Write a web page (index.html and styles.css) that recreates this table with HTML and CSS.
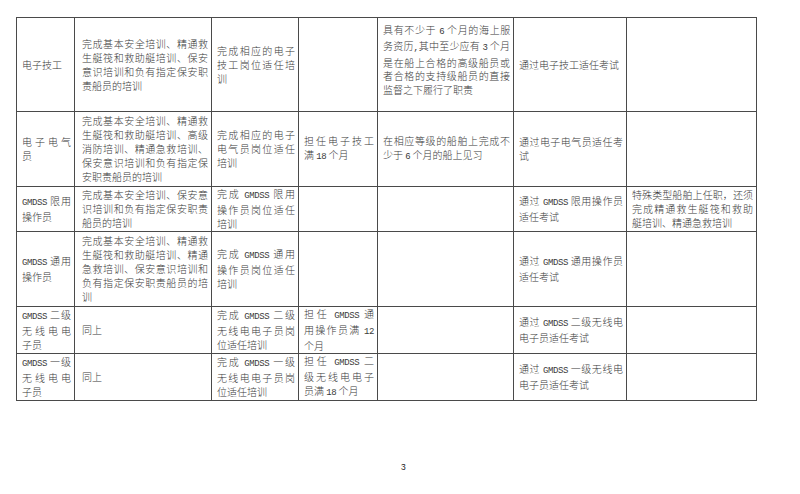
FILE: index.html
```html
<!DOCTYPE html>
<html lang="zh-CN">
<head>
<meta charset="utf-8">
<title>电子技工及 GMDSS 人员适任要求</title>
<link rel="stylesheet" href="styles.css">
</head>
<body>
<div class="page">
  <table class="qual">
    <colgroup>
      <col class="c-post">
      <col class="c-train">
      <col class="c-job">
      <col class="c-serve">
      <col class="c-sea">
      <col class="c-exam">
      <col class="c-note">
    </colgroup>
    <tbody>
      <tr class="row-a">
        <td>电子技工</td>
        <td class="wide"><span class="ln">完成基本安全培训、精通救</span><span class="ln">生艇筏和救助艇培训、保安</span><span class="ln">意识培训和负有指定保安职</span>责船员的培训</td>
        <td><span class="ln">完成相应的电子</span><span class="ln">技工岗位适任培</span>训</td>
        <td></td>
        <td class="dense"><span class="ln cond">具有不少于 <span class="lat">6</span> 个月的海上服</span><span class="ln">务资历<span class="lat">,</span>其中至少应有 <span class="lat">3</span> 个月</span><span class="ln">是在船上合格的高级船员或</span><span class="ln">者合格的支持级船员的直接</span>监督之下履行了职责</td>
        <td>通过电子技工适任考试</td>
        <td></td>
      </tr>
      <tr class="row-b">
        <td><span class="ln">电子电气</span>员</td>
        <td class="wide"><span class="ln">完成基本安全培训、精通救</span><span class="ln">生艇筏和救助艇培训、高级</span><span class="ln">消防培训、精通急救培训、</span><span class="ln">保安意识培训和负有指定保</span>安职责船员的培训</td>
        <td><span class="ln">完成相应的电子</span><span class="ln">电气员岗位适任</span>培训</td>
        <td><span class="ln">担任电子技工</span>满 <span class="lat">18</span> 个月</td>
        <td><span class="ln">在相应等级的船舶上完成不</span>少于 <span class="lat">6</span> 个月的船上见习</td>
        <td><span class="ln">通过电子电气员适任考</span>试</td>
        <td></td>
      </tr>
      <tr class="row-c">
        <td><span class="ln"><span class="lat">GMDSS</span> 限用</span>操作员</td>
        <td class="wide"><span class="ln">完成基本安全培训、保安意</span><span class="ln">识培训和负有指定保安职责</span>船员的培训</td>
        <td><span class="ln">完成 <span class="lat">GMDSS</span> 限用</span><span class="ln">操作员岗位适任</span>培训</td>
        <td></td>
        <td></td>
        <td><span class="ln">通过 <span class="lat">GMDSS</span> 限用操作员</span>适任考试</td>
        <td><span class="ln">特殊类型船舶上任职，还须</span><span class="ln">完成精通救生艇筏和救助</span>艇培训、精通急救培训</td>
      </tr>
      <tr class="row-d">
        <td><span class="ln"><span class="lat">GMDSS</span> 通用</span>操作员</td>
        <td class="wide"><span class="ln">完成基本安全培训、精通救</span><span class="ln">生艇筏和救助艇培训、精通</span><span class="ln">急救培训、保安意识培训和</span><span class="ln">负有指定保安职责船员的培</span>训</td>
        <td><span class="ln">完成 <span class="lat">GMDSS</span> 通用</span><span class="ln">操作员岗位适任</span>培训</td>
        <td></td>
        <td></td>
        <td><span class="ln">通过 <span class="lat">GMDSS</span> 通用操作员</span>适任考试</td>
        <td></td>
      </tr>
      <tr class="row-e">
        <td><span class="ln"><span class="lat">GMDSS</span> 二级</span><span class="ln">无线电电</span>子员</td>
        <td class="wide">同上</td>
        <td><span class="ln">完成 <span class="lat">GMDSS</span> 二级</span><span class="ln">无线电电子员岗</span>位适任培训</td>
        <td><span class="ln">担任 <span class="lat">GMDSS</span> 通</span><span class="ln">用操作员满 <span class="lat">12</span></span>个月</td>
        <td></td>
        <td><span class="ln">通过 <span class="lat">GMDSS</span> 二级无线电</span>电子员适任考试</td>
        <td></td>
      </tr>
      <tr class="row-f">
        <td><span class="ln"><span class="lat">GMDSS</span> 一级</span><span class="ln">无线电电</span>子员</td>
        <td class="wide">同上</td>
        <td><span class="ln">完成 <span class="lat">GMDSS</span> 一级</span><span class="ln">无线电电子员岗</span>位适任培训</td>
        <td><span class="ln">担任 <span class="lat">GMDSS</span> 二</span><span class="ln">级无线电电子</span>员满 <span class="lat">18</span> 个月</td>
        <td></td>
        <td><span class="ln">通过 <span class="lat">GMDSS</span> 一级无线电</span>电子员适任考试</td>
        <td></td>
      </tr>
    </tbody>
  </table>
  <div class="page-no">3</div>
</div>
</body>
</html>
```
FILE: styles.css
```css
html, body {
  margin: 0;
  background: #ffffff;
}

body {
  color: #3a3a3a;
  font-family: "Noto Sans CJK SC", "Noto Sans CJK TC", sans-serif;
  font-weight: 300;
}

.page {
  padding: 17px 0 0 16px;
}

.qual {
  border-collapse: collapse;
  table-layout: fixed;
  width: 740px;
  font-size: 10px;
  line-height: 14px;
}

.c-post  { width: 58px; }
.c-train { width: 137px; }
.c-job   { width: 87px; }
.c-serve { width: 79px; }
.c-sea   { width: 136px; }
.c-exam  { width: 113px; }
.c-note  { width: 130px; }

.qual td {
  border: 1px solid #4a4a4a;
  padding: 0 3px 0 5px;
  vertical-align: middle;
  text-align: justify;
  overflow: hidden;
}

.qual td.wide {
  padding-left: 7px;
}

.row-a { height: 94px; }
.row-b { height: 75px; }
.row-c { height: 45px; }
.row-d { height: 75px; }
.row-e { height: 44px; }
.row-f { height: 44px; }

.qual td.dense {
  line-height: 13.5px;
  padding-bottom: 10px;
}

.ln {
  display: block;
  text-align: justify;
  text-align-last: justify;
}

.cond {
  letter-spacing: -0.3px;
}

.lat {
  font-family: "Liberation Mono", monospace;
  font-size: 9px;
  letter-spacing: -0.4px;
}

.page-no {
  margin-top: 61px;
  padding-left: 385px;
  font-family: "Liberation Sans", Arial, sans-serif;
  font-size: 8.5px;
  line-height: 10px;
  color: #222222;
}
```
